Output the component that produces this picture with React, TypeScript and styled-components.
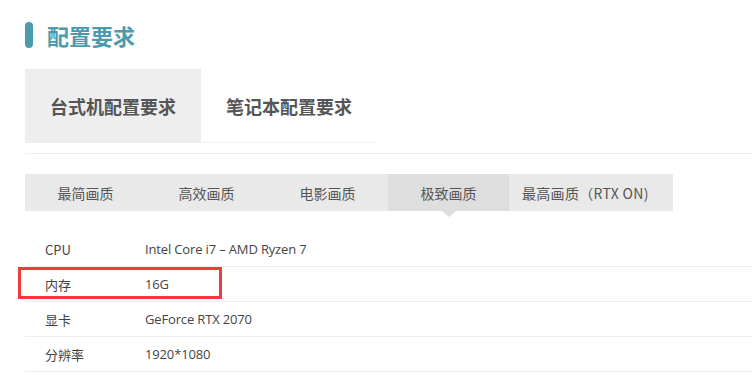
import styled, { createGlobalStyle } from "styled-components"

const GlobalStyle = createGlobalStyle`
  body {
    margin: 0;
    background: #fff;
    font-family: "Open Sans", "Noto Sans CJK SC", sans-serif;
  }
`

const qualities = ["最简画质", "高效画质", "电影画质", "极致画质", "最高画质（RTX ON)"]

const specs = [
  { label: "CPU", value: "Intel Core i7 – AMD Ryzen 7" },
  { label: "内存", value: "16G", marked: true },
  { label: "显卡", value: "GeForce RTX 2070" },
  { label: "分辨率", value: "1920*1080" },
]

const App = () => {
  return (
    <Page>
      <GlobalStyle />
      <Title>
        <span className="bar" />
        <h2>配置要求</h2>
      </Title>

      <Tabs>
        <Tab $active>台式机配置要求</Tab>
        <Tab>笔记本配置要求</Tab>
      </Tabs>

      <QualityBar>
        {qualities.map((q, i) => (
          <Quality key={q} $active={i === 3} $wide={i === 4}>
            {q}
          </Quality>
        ))}
      </QualityBar>

      <SpecList>
        {specs.map((s) => (
          <SpecRow key={s.label}>
            <span className="label">{s.label}</span>
            <span className="value">{s.value}</span>
            {s.marked && <Marker />}
          </SpecRow>
        ))}
      </SpecList>
    </Page>
  )
}

const Page = styled.div`
  padding: 22px 0 0 25px;
  color: #555;
`

const Title = styled.div`
  display: flex;
  align-items: center;
  height: 26px;

  .bar {
    width: 8px;
    height: 26px;
    border-radius: 4px;
    background: #4b9bae;
    margin-right: 14px;
  }

  h2 {
    margin: 0;
    font-size: 22px;
    line-height: 26px;
    font-weight: 700;
    color: #4b9bae;
    font-family: "Noto Sans CJK SC", sans-serif;
  }
`

const Tabs = styled.div`
  display: flex;
  margin-top: 21px;
  padding-bottom: 10px;
  border-bottom: 1px solid #eee;
`

const Tab = styled.div<{ $active?: boolean }>`
  width: 176px;
  height: 73px;
  display: flex;
  align-items: center;
  justify-content: center;
  font-family: "Noto Sans CJK SC", sans-serif;
  font-size: 18px;
  font-weight: 700;
  color: #555;
  background: ${(p) => (p.$active ? "#eee" : "#fff")};
  border-bottom: 1px solid ${(p) => (p.$active ? "#eee" : "#f0f0f0")};
`

const QualityBar = styled.div`
  display: flex;
  width: 648px;
  margin-top: 20px;
  height: 37px;
  background: #e9e9e9;
`

const Quality = styled.div<{ $active?: boolean; $wide?: boolean }>`
  position: relative;
  box-sizing: border-box;
  width: ${(p) => (p.$wide ? "164px" : "121px")};
  display: flex;
  align-items: center;
  justify-content: ${(p) => (p.$wide ? "flex-start" : "center")};
  padding-left: ${(p) => (p.$wide ? "13px" : "0")};
  letter-spacing: ${(p) => (p.$wide ? "0.3px" : "0")};
  font-family: "Noto Sans CJK SC", sans-serif;
  font-size: 14px;
  color: #555;
  background: ${(p) => (p.$active ? "#dedede" : "transparent")};

  ${(p) =>
    p.$active &&
    `
    &::after {
      content: "";
      position: absolute;
      left: 50%;
      top: 100%;
      margin-left: -7px;
      border-left: 7px solid transparent;
      border-right: 7px solid transparent;
      border-top: 6px solid #dedede;
    }
  `}
`

const SpecList = styled.div`
  margin-top: 21px;
`

const SpecRow = styled.div`
  position: relative;
  display: flex;
  align-items: center;
  height: 34px;
  border-bottom: 1px solid #eee;
  font-size: 13px;
  color: #444;

  .label {
    width: 100px;
    padding-left: 20px;
    font-family: "Noto Sans CJK SC", sans-serif;
  }

  .value {
    font-family: "Open Sans", "Noto Sans CJK SC", sans-serif;
    letter-spacing: -0.15px;
  }
`

const Marker = styled.div`
  position: absolute;
  left: -7px;
  top: 0;
  width: 198px;
  height: 26px;
  border: 3px solid #f03a3c;
`

export default App
